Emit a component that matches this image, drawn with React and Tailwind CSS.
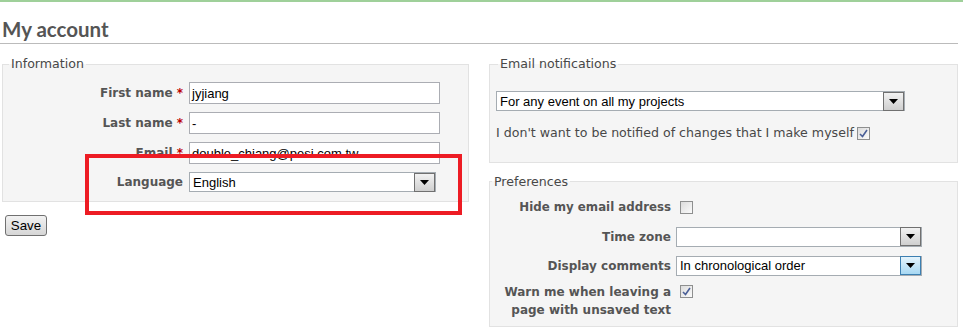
import React from "react";

function Arrow({ blue }) {
  return (
    <div
      className={
        blue
          ? "flex h-[19px] w-[21px] items-center justify-center border border-[#3c7fb1] bg-gradient-to-b from-[#e5f4fc] to-[#a7d8f3]"
          : "flex h-[19px] w-[21px] items-center justify-center border border-[#707070] bg-gradient-to-b from-[#f2f2f2] to-[#cfcfcf]"
      }
    >
      <svg width="9" height="5" viewBox="0 0 9 5">
        <polygon points="0,0 9,0 4.5,5" fill="#000" />
      </svg>
    </div>
  );
}

function Select({ value, width, blue }) {
  return (
    <div
      className="flex h-[20px] items-center border border-[#a5acb2] bg-white"
      style={{ width }}
    >
      <span className="flex-1 pl-[3px] font-['Liberation_Sans'] text-[13px] leading-none text-black">
        {value}
      </span>
      <Arrow blue={blue} />
    </div>
  );
}

function Checkbox({ checked }) {
  return (
    <div className="flex h-[13px] w-[13px] items-center justify-center border border-[#8e8f8f] bg-gradient-to-br from-[#dcdcdc] to-[#fbfbfb]">
      {checked && (
        <svg width="9" height="9" viewBox="0 0 9 9">
          <path d="M1 5 L3.5 7.5 L8 1" stroke="#4a5f97" strokeWidth="1.6" fill="none" />
        </svg>
      )}
    </div>
  );
}

function TextInput({ value }) {
  return (
    <div className="flex h-[22px] w-[251px] items-center border border-[#abadb3] bg-white pl-[2px] font-['Liberation_Sans'] text-[13px] leading-none text-black">
      {value}
    </div>
  );
}

function Row({ label, required, children }) {
  return (
    <div className="flex items-center">
      <div className="w-[180px] text-right text-[12px] font-bold text-[#555]">
        {label}
        {required && <span className="text-[#bb0000]"> *</span>}
      </div>
      <div className="ml-[6px]">{children}</div>
    </div>
  );
}

export default function App() {
  return (
    <div className="relative h-[330px] w-[963px] overflow-hidden bg-white font-['DejaVu_Sans',sans-serif] text-[12.6px] text-[#484848]">
      <div className="h-[2px] bg-[#9fd09a]" />
      <div className="pr-[5px]">
        <h2 className="mt-[17px] border-b border-[#bbb] pb-[4px] pl-[2px] font-['Lato',sans-serif] text-[20.5px] font-bold leading-[20px] text-[#555]">
          My account
        </h2>
        <div className="mt-[13px] grid grid-cols-[467px_469px] gap-x-[20px] pl-[2px]">
          <div>
            <fieldset className="border border-[#e2e2e2] bg-[#f5f5f5] px-0 pb-[9px] pt-[11px]">
              <legend className="ml-[6px] px-[2px] leading-[14px] text-[#484848]">
                Information
              </legend>
              <div className="flex flex-col gap-[8px]">
                <Row label="First name" required>
                  <TextInput value="jyjiang" />
                </Row>
                <Row label="Last name" required>
                  <TextInput value="-" />
                </Row>
                <Row label="Email" required>
                  <TextInput value="double_chiang@pesi.com.tw" />
                </Row>
                <Row label="Language">
                  <Select value="English" width={247} />
                </Row>
              </div>
            </fieldset>
            <button className="ml-[3px] mt-[13px] h-[21px] w-[42px] rounded-[3px] border border-[#707070] bg-gradient-to-b from-[#f2f2f2] to-[#d6d6d6] font-['Liberation_Sans'] text-[13.3px] leading-none text-black">
              Save
            </button>
          </div>
          <div className="flex flex-col gap-[12px]">
            <fieldset className="border border-[#e2e2e2] bg-[#f5f5f5] pb-[19px] pl-[6px] pt-[20px]">
              <legend className="ml-[2px] px-[2px] leading-[14px] text-[#484848]">
                Email notifications
              </legend>
              <Select value="For any event on all my projects" width={409} />
              <div className="mt-[13px] flex items-center gap-[3px]">
                <span>I don't want to be notified of changes that I make myself</span>
                <Checkbox checked />
              </div>
            </fieldset>
            <fieldset className="border border-[#e2e2e2] bg-[#f5f5f5] pb-[7px] pt-[10px]">
              <legend className="ml-[2px] px-[2px] leading-[14px] text-[#484848]">
                Preferences
              </legend>
              <div className="flex flex-col">
                <div className="flex items-center">
                  <div className="w-[181px] text-right text-[11.8px] font-bold text-[#555]">Hide my email address</div>
                  <div className="ml-[9px]"><Checkbox /></div>
                </div>
                <div className="mt-[10px] flex items-center">
                  <div className="w-[181px] text-right text-[12px] font-bold text-[#555]">Time zone</div>
                  <div className="ml-[5px]"><Select value="" width={246} /></div>
                </div>
                <div className="mt-[9px] flex items-center">
                  <div className="w-[181px] text-right text-[12px] font-bold text-[#555]">Display comments</div>
                  <div className="ml-[5px]"><Select value="In chronological order" width={246} blue /></div>
                </div>
                <div className="mt-[7px] flex items-start">
                  <div className="w-[181px] text-right text-[12px] font-bold leading-[18px] text-[#555]">
                    Warn me when leaving a<br />page with unsaved text
                  </div>
                  <div className="ml-[9px] mt-[2px]"><Checkbox checked /></div>
                </div>
              </div>
            </fieldset>
          </div>
        </div>
      </div>
      <div className="absolute left-[85px] top-[154px] h-[61px] w-[377px] border-4 border-[#ed1c24]" />
    </div>
  );
}
